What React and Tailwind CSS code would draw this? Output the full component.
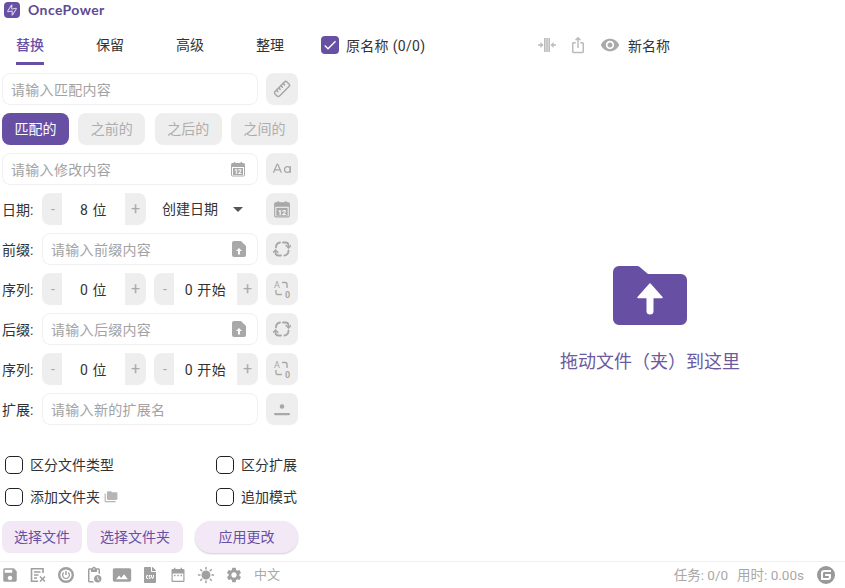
import { Ruler, CaseSensitive, Zap } from 'lucide-react'
import { MdFolderCopy, MdSave, MdPendingActions, MdPanorama, MdSettings, MdSunny, MdIosShare, MdVisibility, MdCheck, MdArrowDropDown } from 'react-icons/md'
import { FaFileCsv } from 'react-icons/fa'
import { SiGitee } from 'react-icons/si'

const FONT = 'font-["Roboto","Noto_Sans_CJK_SC",sans-serif]'

function CalendarIcon({ className }) {
  return (
    <svg viewBox="0 0 16 16" className={className}>
      <path d="M4 1h1.4v2H4zM10.600 1H12v2h-1.400z" fill="currentColor" />
      <rect x="1.500" y="2.500" width="13" height="12.500" rx="1" fill="none" stroke="currentColor" />
      <rect x="1.500" y="2.500" width="13" height="3.500" fill="currentColor" />
      <rect x="3" y="7" width="10" height="7" fill="currentColor" />
      <text x="8" y="13" textAnchor="middle" fontSize="6.500" fontWeight="700" fill="#fff" fontFamily="Roboto">12</text>
    </svg>
  )
}

function FileUpIcon({ className }) {
  return (
    <svg viewBox="0 0 14 16" className={className}>
      <path d="M2 0H9L14 5V14a2 2 0 0 1-2 2H2a2 2 0 0 1-2-2V2a2 2 0 0 1 2-2z" fill="currentColor" />
      <path d="M7 7l3 3H8v3.500H6V10H4z" fill="#fff" />
    </svg>
  )
}

function CycleIcon({ className }) {
  return (
    <svg viewBox="0 0 18 18" className={className} fill="none" stroke="currentColor" strokeWidth="1.800" strokeLinecap="round">
      <path d="M3 7.500C3 4.500 4 3 7 2.500" />
      <path d="M10 2.500h2.500c2 0 3 1 3 3V7" />
      <path d="M15.500 10.500c0 3-1 4.500-4 5" />
      <path d="M8 15.500H5.500c-2 0-3-1-3-3V11" />
      <path d="M13 5.500l2.500 2.500L18 5.500M0 12.500L2.500 10 5 12.500" strokeWidth="1.300" />
    </svg>
  )
}

function SequenceIcon({ className }) {
  return (
    <svg viewBox="0 0 20 20" className={className} fill="none" stroke="currentColor" strokeWidth="1.400">
      <text x="5" y="8.500" textAnchor="middle" fontSize="9" fill="currentColor" stroke="none" fontFamily="Roboto">A</text>
      <text x="15.500" y="18.500" textAnchor="middle" fontSize="9" fontWeight="700" fill="currentColor" stroke="none" fontFamily="Roboto">0</text>
      <path d="M10 3.500h3.500a1.500 1.500 0 0 1 1.500 1.500V9" />
      <path d="M4 11v3a1.500 1.500 0 0 0 1.500 1.500H10" />
    </svg>
  )
}

function DotLineIcon({ className }) {
  return (
    <svg viewBox="0 0 18 18" className={className} fill="currentColor">
      <circle cx="9" cy="6.500" r="2.300" />
      <rect x="1" y="13" width="16" height="2.200" rx="1.100" />
    </svg>
  )
}

function CompressIcon({ className }) {
  return (
    <svg viewBox="0 0 18 18" className={className} fill="currentColor">
      <rect x="6" y="2" width="1.600" height="14" />
      <rect x="8.200" y="2" width="1.600" height="14" />
      <rect x="10.400" y="2" width="1.600" height="14" />
      <path d="M0 8.200h2.500V6l3 3-3 3V9.800H0zM18 8.200h-2.500V6l-3 3 3 3V9.800H18z" />
    </svg>
  )
}

function RuleListIcon({ className }) {
  return (
    <svg viewBox="0 0 16 16" className={className} fill="none" stroke="currentColor" strokeWidth="1.600">
      <path d="M13 6V1.800H1.500V14.200H8" />
      <path d="M4 5h6.500M4 8h4.500M4 11h3" />
      <path d="M10 9.500l5 5M15 9.500l-5 5" />
    </svg>
  )
}

function PowerIcon({ className }) {
  return (
    <svg viewBox="0 0 16 16" className={className} fill="none" stroke="currentColor">
      <circle cx="8" cy="8" r="6.800" strokeWidth="2.400" />
      <path d="M8 4v4" strokeWidth="1.500" />
      <path d="M5.700 5.500a3.400 3.400 0 1 0 4.600 0" strokeWidth="1.300" />
    </svg>
  )
}

function CalendarDots({ className }) {
  return (
    <svg viewBox="0 0 16 16" className={className} fill="currentColor">
      <path d="M4 .800h1.400v2H4zM10.600 .800H12v2h-1.400z" />
      <path fillRule="evenodd" d="M2.500 2H13.500a1 1 0 0 1 1 1V14a1 1 0 0 1-1 1H2.500a1 1 0 0 1-1-1V3a1 1 0 0 1 1-1zM2.700 6.500V13.800H13.300V6.500z" />
      <path d="M4 7.800h1.500v1.500H4zM7.200 7.800h1.500v1.500H7.200zM10.500 7.800H12v1.500h-1.500z" />
    </svg>
  )
}

function TextInput({ placeholder, icon }) {
  return (
    <div className="flex h-8 min-w-0 flex-1 items-center rounded-lg border border-[#f0f0f0] bg-white pl-2 pr-[11px]">
      <input placeholder={placeholder} className="w-0 flex-1 bg-transparent pt-px text-sm tracking-[0.3px] text-[#444] outline-none placeholder:text-[#a3a3a3]" />
      {icon}
    </div>
  )
}

function SideButton({ children }) {
  return <button className="flex h-8 w-8 shrink-0 items-center justify-center rounded-lg bg-[#eeeeee] text-[#a8a8a8]">{children}</button>
}

function Stepper({ value }) {
  return (
    <div className="flex h-8 w-[104px] items-stretch overflow-hidden rounded-lg bg-[#eeeeee] text-[#ababab]">
      <button className="w-5 pl-0.5 text-sm">-</button>
      <div className="flex flex-1 items-center justify-center bg-white pt-px text-sm tracking-[0.6px] text-[#333]">{value}</div>
      <button className="w-[21px] text-base">+</button>
    </div>
  )
}

function FormRow({ label, children, side }) {
  return (
    <div className="flex h-8 items-center">
      {label && <span className="w-10 shrink-0 pt-px text-sm text-[#333]">{label}</span>}
      <div className="flex min-w-0 flex-1 items-center gap-2">{children}</div>
      <div className="ml-2">{side}</div>
    </div>
  )
}

function Check({ label, extra }) {
  return (
    <label className="flex h-[18px] items-center gap-[7px]">
      <span className="h-[18px] w-[18px] rounded-[5px] border border-[#222] bg-white" />
      <span className="text-sm text-[#333]">{label}</span>
      {extra}
    </label>
  )
}

const fileIcon = <FileUpIcon className="h-4 w-[14px] text-[#a8a8a8]" />
const calIcon = <CalendarIcon className="h-4 w-4 text-[#a8a8a8]" />

export default function App() {
  return (
    <div className={`${FONT} flex h-[588px] w-[845px] flex-col overflow-hidden bg-white`}>
      <div className="flex flex-1 min-h-0">
        <div className="flex w-[310px] shrink-0 flex-col pl-[2px] pr-3">
          <div className="flex h-5 items-center gap-2 pl-[2px]">
            <span className="flex h-4 w-4 items-center justify-center rounded-sm bg-[#6750a4]">
              <Zap className="h-3 w-3 -rotate-12 text-[#ddd3ee]" />
            </span>
            <span className="text-sm font-bold tracking-[0.4px] text-[#5d4a96] font-['Lato']">OncePower</span>
          </div>
          <div className="flex h-[53px] justify-between px-[14px] pt-[15px] text-sm text-[#333]">
            <span className="h-[30px] border-b-[3px] border-[#6750a4] font-medium text-[#6750a4]">替换</span>
            <span>保留</span>
            <span>高级</span>
            <span>整理</span>
          </div>

          <div className="flex flex-col gap-2">
            <FormRow side={<SideButton><Ruler className="h-[18px] w-[18px] -scale-x-100" /></SideButton>}>
              <TextInput placeholder="请输入匹配内容" />
            </FormRow>
            <div className="flex h-8 justify-between text-sm">
              <button className="w-[67px] rounded-lg bg-[#6750a4] text-white">匹配的</button>
              <button className="w-[67px] rounded-lg bg-[#eeeeee] text-[#adadad]">之前的</button>
              <button className="w-[67px] rounded-lg bg-[#eeeeee] text-[#adadad]">之后的</button>
              <button className="w-[67px] rounded-lg bg-[#eeeeee] text-[#adadad]">之间的</button>
            </div>
            <FormRow side={<SideButton><CaseSensitive className="h-5 w-5" strokeWidth={1.500} /></SideButton>}>
              <TextInput placeholder="请输入修改内容" icon={calIcon} />
            </FormRow>
            <FormRow label="日期:" side={<SideButton><CalendarIcon className="h-[18px] w-[18px]" /></SideButton>}>
              <Stepper value="8 位" />
              <div className="flex w-[104px] items-center justify-between pl-2 pr-2 text-sm text-[#333]">
                创建日期
                <MdArrowDropDown className="h-6 w-6 text-[#555]" />
              </div>
            </FormRow>
            <FormRow label="前缀:" side={<SideButton><CycleIcon className="h-[18px] w-[18px]" /></SideButton>}>
              <TextInput placeholder="请输入前缀内容" icon={fileIcon} />
            </FormRow>
            <FormRow label="序列:" side={<SideButton><SequenceIcon className="h-5 w-5" /></SideButton>}>
              <Stepper value="0 位" />
              <Stepper value="0 开始" />
            </FormRow>
            <FormRow label="后缀:" side={<SideButton><CycleIcon className="h-[18px] w-[18px]" /></SideButton>}>
              <TextInput placeholder="请输入后缀内容" icon={fileIcon} />
            </FormRow>
            <FormRow label="序列:" side={<SideButton><SequenceIcon className="h-5 w-5" /></SideButton>}>
              <Stepper value="0 位" />
              <Stepper value="0 开始" />
            </FormRow>
            <FormRow label="扩展:" side={<SideButton><DotLineIcon className="h-[18px] w-[18px]" /></SideButton>}>
              <TextInput placeholder="请输入新的扩展名" />
            </FormRow>
          </div>

          <div className="mt-[31px] grid grid-cols-[211px_1fr] gap-y-[14px] pl-[3px]">
            <Check label="区分文件类型" />
            <Check label="区分扩展" />
            <Check label="添加文件夹" extra={<MdFolderCopy className="-ml-[3px] h-[14px] w-[14px] text-[#b5b5b5]" />} />
            <Check label="追加模式" />
          </div>

          <div className="mt-[15px] flex h-8 text-sm text-[#6750a4]">
            <button className="w-20 rounded-lg bg-[#f3e8f6]">选择文件</button>
            <button className="ml-[5px] w-24 rounded-lg bg-[#f3e8f6]">选择文件夹</button>
            <button className="ml-3 w-[103px] rounded-full bg-[#f3e8f6] shadow-[0_1px_2px_rgba(0,0,0,0.2)]">应用更改</button>
          </div>
        </div>

        <div className="relative flex min-w-0 flex-1 flex-col">
          <div className="flex h-[72px] items-start pl-[11px] pt-9 text-sm text-[#333]">
            <span className="flex h-[18px] w-[18px] items-center justify-center rounded-[4px] bg-[#6750a4] text-white">
              <MdCheck className="h-4 w-4" />
            </span>
            <span className="ml-[7px] w-[192px] pt-px leading-[18px] tracking-[0.3px]">原名称 (0/0)</span>
            <CompressIcon className="h-[18px] w-[18px] text-[#bbbbbb]" />
            <MdIosShare className="ml-[13px] h-[18px] w-[18px] text-[#bbbbbb]" />
            <MdVisibility className="ml-[13px] h-5 w-5 -translate-y-px text-[#aaaaaa]" />
            <span className="ml-[8px] pt-px leading-[18px]">新名称</span>
          </div>
          <div className="flex flex-1 flex-col items-center pl-[145px] pt-[194px]">
            <svg viewBox="0 0 74 59" className="h-[59px] w-[74px]">
              <path d="M6 0H24a4 4 0 0 1 3 1.300L35 8H68a6 6 0 0 1 6 6V53a6 6 0 0 1-6 6H6a6 6 0 0 1-6-6V6a6 6 0 0 1 6-6z" fill="#6750a4" />
              <path d="M37 18L49 31.500H25z" fill="#fff" stroke="#fff" strokeWidth="1.500" strokeLinejoin="round" />
              <path d="M37 30V45" stroke="#fff" strokeWidth="7" strokeLinecap="round" />
            </svg>
            <p className="mt-[23px] text-lg text-[#6c5a9e]">拖动文件（夹）到这里</p>
          </div>
        </div>
      </div>

      <div className="flex h-[27px] items-center border-t border-[#efefef] pl-[2px] pr-[10px] text-[13.500px] text-[#a8a8a8]">
        <div className="flex items-center gap-3 text-[#a0a0a0]">
          <MdSave className="-mx-px h-[18px] w-[18px]" />
          <RuleListIcon className="h-4 w-4" />
          <PowerIcon className="h-4 w-4" />
          <MdPendingActions className="-mx-px h-[18px] w-[18px]" />
          <MdPanorama className="-mx-0.5 h-5 w-5" />
          <FaFileCsv className="h-4 w-4" />
          <CalendarDots className="h-4 w-4" />
          <MdSunny className="-mx-px h-[18px] w-[18px]" />
          <MdSettings className="-mx-px h-[18px] w-[18px]" />
          <span className="text-[13px] text-[#aaaaaa]">中文</span>
        </div>
        <span className="ml-auto">任务: 0/0</span>
        <span className="ml-[9px]">用时: 0.00s</span>
        <SiGitee className="ml-[13px] h-[18px] w-[18px] text-[#999999]" />
      </div>
    </div>
  )
}
